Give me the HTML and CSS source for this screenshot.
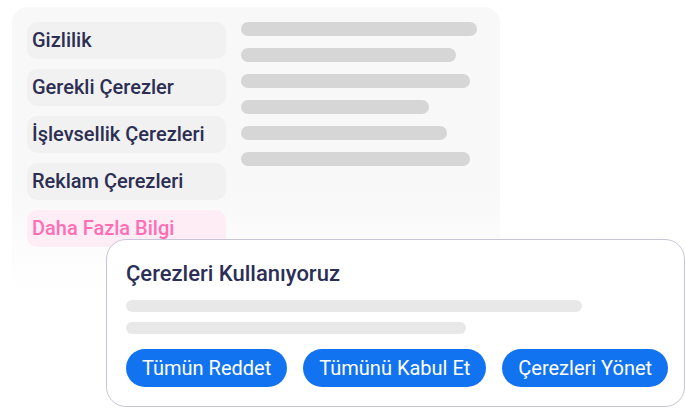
FILE: index.html
```html
<!DOCTYPE html>
<html lang="tr">
<head>
<meta charset="utf-8">
<link rel="stylesheet" href="styles.css">
</head>
<body>
<div class="stage">
  <div class="panel">
    <div class="menu">
      <div class="item">Gizlilik</div>
      <div class="item">Gerekli Çerezler</div>
      <div class="item">İşlevsellik Çerezleri</div>
      <div class="item">Reklam Çerezleri</div>
      <div class="item item-pink">Daha Fazla Bilgi</div>
    </div>
    <div class="lines">
      <div class="line" style="width:236px"></div>
      <div class="line" style="width:215px"></div>
      <div class="line" style="width:229px"></div>
      <div class="line" style="width:188px"></div>
      <div class="line" style="width:206px"></div>
      <div class="line" style="width:229px"></div>
    </div>
  </div>
  <div class="card">
    <div class="title">Çerezleri Kullanıyoruz</div>
    <div class="card-lines">
      <div class="cline" style="width:456px"></div>
      <div class="cline" style="width:340px"></div>
    </div>
    <div class="buttons">
      <div class="btn">Tümün Reddet</div>
      <div class="btn">Tümünü Kabul Et</div>
      <div class="btn">Çerezleri Yönet</div>
    </div>
  </div>
</div>
</body>
</html>
```
FILE: styles.css
```css
* { box-sizing: border-box; }
html, body { margin: 0; padding: 0; background: #fff; }
body { font-family: Roboto, "Noto Sans", sans-serif; width: 686px; height: 408px; overflow: hidden; }
.stage { position: relative; width: 686px; height: 408px; padding: 7px 0 0 12px; }
.panel {
  width: 488px;
  height: 285px;
  border-radius: 16px;
  background: linear-gradient(to bottom, #f8f8f8 0%, #f8f8f8 64%, #ffffff 100%);
  padding: 15px 0 0 15px;
  display: flex;
  gap: 15px;
}
.menu { width: 199px; display: flex; flex-direction: column; gap: 10px; }
.item {
  height: 37px;
  line-height: 37px;
  border-radius: 10px;
  background: #f1f1f1;
  padding-left: 5px;
  font-size: 20px;
  font-weight: 500;
  color: #2c2e52;
  white-space: nowrap;
}
.item-pink { background: #ffedf6; color: #ff6db4; }
.lines { display: flex; flex-direction: column; gap: 12px; }
.line { height: 14px; border-radius: 7px; background: #d6d6d6; }
.card {
  position: absolute;
  left: 106px;
  top: 239px;
  width: 579px;
  height: 168px;
  background: #fff;
  border: 1px solid #c9c5d9;
  border-radius: 20px;
  padding: 20px 0 0 19px;
}
.title { font-size: 22px; font-weight: 500; color: #2b2e56; line-height: 28px; }
.card-lines { margin-top: 12px; display: flex; flex-direction: column; gap: 10px; }
.cline { height: 12px; border-radius: 6px; background: #e8e8e8; }
.buttons { margin-top: 15px; display: flex; gap: 16px; }
.btn {
  height: 38px;
  line-height: 38px;
  border-radius: 19px;
  background: #1273f0;
  color: #fff;
  font-size: 20px;
  padding: 0 16px;
  white-space: nowrap;
}
```
